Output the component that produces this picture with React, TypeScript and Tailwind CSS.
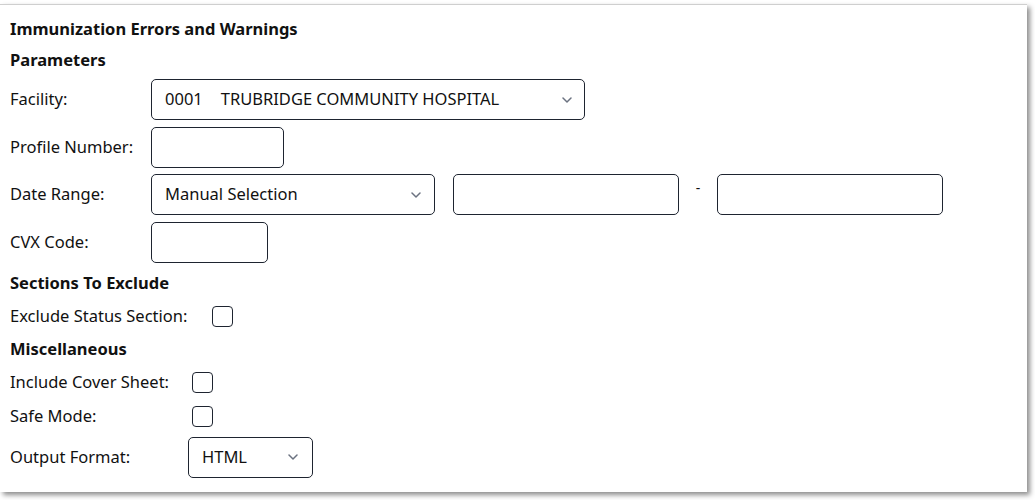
import React from "react";

const Chevron = () => (
  <svg width="10" height="6" viewBox="0 0 10 6" fill="none" className="shrink-0">
    <path d="M1 1l4 4 4-4" stroke="#6b7280" strokeWidth="1.5" strokeLinecap="round" strokeLinejoin="round" />
  </svg>
);

const Box = ({ w, children }: { w: string; children?: React.ReactNode }) => (
  <div className={`${w} h-[41px] border border-[#1e2430] rounded-[5px] bg-white flex items-center`}>{children}</div>
);

const Check = ({ ml }: { ml: string }) => (
  <div className={`${ml} w-[21px] h-[21px] border border-[#1e2430] rounded-[4px] bg-white`} />
);

export default function App() {
  return (
    <div className="w-[1035px] h-[500px] bg-white pt-[4px]" style={{ fontFamily: "'Noto Sans', sans-serif" }}>
      <div className="w-[1027px] h-[488px] bg-white border-t border-[#cfcfcf] shadow-[3px_3px_5px_rgba(0,0,0,0.45)] pl-[10px] pt-[8.5px] text-[#111] text-[16.5px]">
        <div className="h-[31px] flex items-center font-bold text-[16.5px]">Immunization Errors and Warnings</div>
        <div className="h-[31px] flex items-center font-bold text-[16.5px]">Parameters</div>

        <div className="flex flex-col pt-[3.5px] gap-[6.67px]">
          <div className="h-[41px] flex items-center">
            <div className="w-[141px]">Facility:</div>
            <Box w="w-[434px]">
              <div className="flex-1 flex items-center pl-[13px]">
                <span>0001</span>
                <span className="ml-[18px]">TRUBRIDGE COMMUNITY HOSPITAL</span>
              </div>
              <div className="pr-[12px]"><Chevron /></div>
            </Box>
          </div>
          <div className="h-[41px] flex items-center">
            <div className="w-[141px]">Profile Number:</div>
            <Box w="w-[133px]" />
          </div>
          <div className="h-[41px] flex items-center">
            <div className="w-[141px]">Date Range:</div>
            <Box w="w-[284px]">
              <div className="flex-1 pl-[13px]">Manual Selection</div>
              <div className="pr-[13px]"><Chevron /></div>
            </Box>
            <div className="ml-[18px]"><Box w="w-[226px]" /></div>
            <div className="w-[38px] flex justify-center self-start pt-[3px] text-[14px]">-</div>
            <Box w="w-[226px]" />
          </div>
          <div className="h-[41px] flex items-center">
            <div className="w-[141px]">CVX Code:</div>
            <Box w="w-[117px]" />
          </div>
        </div>

        <div className="mt-[4.5px] h-[31px] flex items-center font-bold text-[16.5px]">Sections To Exclude</div>
        <div className="mt-[7.5px] h-[21px] flex items-center">
          <div className="w-[202px]">Exclude Status Section:</div>
          <Check ml="ml-0" />
        </div>

        <div className="mt-[6.5px] h-[31px] flex items-center font-bold text-[16.5px]">Miscellaneous</div>
        <div className="mt-[7.5px] h-[21px] flex items-center">
          <div className="w-[178px]">Include Cover Sheet:</div>
          <Check ml="ml-[4px]" />
        </div>
        <div className="mt-[13px] h-[21px] flex items-center">
          <div className="w-[178px]">Safe Mode:</div>
          <Check ml="ml-[4px]" />
        </div>
        <div className="mt-[10px] h-[41px] flex items-center">
          <div className="w-[178px]">Output Format:</div>
          <Box w="w-[125px]">
            <div className="flex-1 pl-[13px]">HTML</div>
            <div className="pr-[14px]"><Chevron /></div>
          </Box>
        </div>
      </div>
    </div>
  );
}
